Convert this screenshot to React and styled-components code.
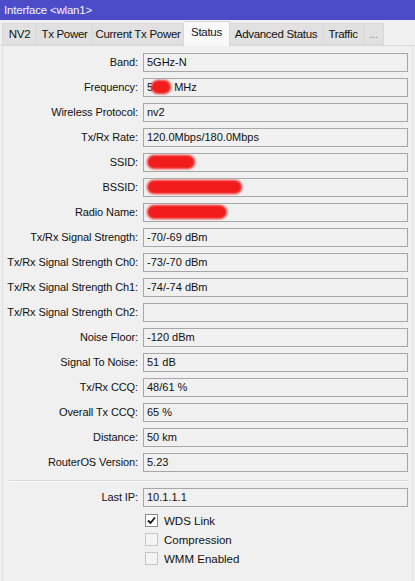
import React from 'react'
import styled, { createGlobalStyle } from 'styled-components';

const GlobalStyle = createGlobalStyle`
  body {
    margin: 0;
    background: #f0f0f0;
    font-family: "Liberation Sans", Arial, sans-serif;
  }
`;

const tabs = [
  { name: 'NV2', w: 35 },
  { name: 'Tx Power', w: 56 },
  { name: 'Current Tx Power', w: 91 },
  { name: 'Status', w: 46, active: true },
  { name: 'Advanced Status', w: 93 },
  { name: 'Traffic', w: 41 },
  { name: '...', w: 20, muted: true },
];

const rows = [
  { label: 'Band', value: '5GHz-N' },
  { label: 'Frequency', value: 'freq' },
  { label: 'Wireless Protocol', value: 'nv2' },
  { label: 'Tx/Rx Rate', value: '120.0Mbps/180.0Mbps' },
  { label: 'SSID', redact: 48 },
  { label: 'BSSID', redact: 95 },
  { label: 'Radio Name', redact: 80 },
  { label: 'Tx/Rx Signal Strength', value: '-70/-69 dBm' },
  { label: 'Tx/Rx Signal Strength Ch0', value: '-73/-70 dBm' },
  { label: 'Tx/Rx Signal Strength Ch1', value: '-74/-74 dBm' },
  { label: 'Tx/Rx Signal Strength Ch2', value: '' },
  { label: 'Noise Floor', value: '-120 dBm' },
  { label: 'Signal To Noise', value: '51 dB' },
  { label: 'Tx/Rx CCQ', value: '48/61 %' },
  { label: 'Overall Tx CCQ', value: '65 %' },
  { label: 'Distance', value: '50 km' },
  { label: 'RouterOS Version', value: '5.23' },
];

const checks = [
  { label: 'WDS Link', checked: true },
  { label: 'Compression', checked: false },
  { label: 'WMM Enabled', checked: false },
];

function Value({ row }) {
  if (row.redact) return <Redact $w={row.redact} />;
  if (row.value === 'freq') {
    return (
      <>
        5<Redact $w={20} style={{ marginLeft: -2 }} /> MHz
      </>
    );
  }
  return row.value;
}

function App() {
  return (
    <Window>
      <GlobalStyle />
      <TitleBar>Interface &lt;wlan1&gt;</TitleBar>
      <TabBar>
        {tabs.map(t => (
          <Tab key={t.name} $w={t.w} $active={t.active} $muted={t.muted}>{t.name}</Tab>
        ))}
      </TabBar>
      <Panel>
        <Form>
          {rows.map(r => (
            <React.Fragment key={r.label}>
              <Label>{r.label}:</Label>
              <Field><Value row={r} /></Field>
            </React.Fragment>
          ))}
        </Form>
        <Separator />
        <Form>
          <Label>Last IP:</Label>
          <Field>10.1.1.1</Field>
        </Form>
        <Checks>
          {checks.map(c => (
            <CheckRow key={c.label}>
              <Box $checked={c.checked}>
                {c.checked && (
                  <svg width="9" height="9" viewBox="0 0 9 9">
                    <path d="M1 4.5 L3.5 7 L8 1.5" fill="none" stroke="#111" strokeWidth="1.8" />
                  </svg>
                )}
              </Box>
              {c.label}
            </CheckRow>
          ))}
        </Checks>
      </Panel>
    </Window>
  )
}

const Window = styled.div`
  width: 415px;
  height: 581px;
  overflow: hidden;
  background: #f0f0f0;
  font-size: 11px;
  color: #111;
`;

const TitleBar = styled.div`
  height: 20px;
  line-height: 20px;
  padding-left: 4px;
  background: #4c4cc8;
  color: #f4f4ff;
  font-size: 11.5px;
  letter-spacing: -0.2px;
`;

const TabBar = styled.div`
  display: flex;
  align-items: flex-end;
  height: 25px;
  padding-left: 2px;
  border-bottom: 1px solid #d9d9d9;
`;

const Tab = styled.div`
  width: ${p => p.$w}px;
  height: ${p => (p.$active ? '25px' : '22px')};
  line-height: ${p => (p.$active ? '21px' : '21px')};
  margin-bottom: ${p => (p.$active ? '-1px' : '0')};
  background: ${p => (p.$active ? '#f9f9f9' : '#e1e1e1')};
  border: 1px solid #d8d8d8;
  border-left: none;
  border-bottom: ${p => (p.$active ? 'none' : '1px solid #d8d8d8')};
  color: ${p => (p.$muted ? '#888' : '#111')};
  font-size: 11.5px;
  letter-spacing: -0.3px;
  text-align: center;
  box-sizing: border-box;
  white-space: nowrap;
  &:first-child {
    border-left: 1px solid #d8d8d8;
  }
`;

const Panel = styled.div`
  margin: 0 2px;
  height: 536px;
  padding: 7px 4px 0 0;
  border-left: 1px solid #e2e2e2;
  border-right: 1px solid #e2e2e2;
  box-sizing: border-box;
`;

const Form = styled.div`
  display: grid;
  grid-template-columns: 135px 1fr;
  column-gap: 5px;
  row-gap: 6px;
`;

const Label = styled.div`
  height: 19px;
  line-height: 19px;
  text-align: right;
  white-space: nowrap;
  font-size: 11px;
  letter-spacing: -0.1px;
`;

const Field = styled.div`
  height: 19px;
  line-height: 17px;
  box-sizing: border-box;
  border: 1px solid #a7a7a7;
  background: #f0f0f0;
  padding-left: 3px;
  font-size: 11px;
  white-space: nowrap;
  overflow: hidden;
`;

const Redact = styled.span`
  display: inline-block;
  vertical-align: middle;
  width: ${p => p.$w}px;
  height: 14px;
  margin-top: -2px;
  border-radius: 8px;
  background: #f21c1c;
  filter: blur(0.8px);
`;

const Separator = styled.div`
  margin: 8px 0 6px 6px;
  height: 1px;
  background: #d7d7d7;
  border-bottom: 1px solid #fbfbfb;
`;

const Checks = styled.div`
  display: flex;
  flex-direction: column;
  padding: 4px 0 0 142px;
`;

const CheckRow = styled.div`
  display: flex;
  align-items: center;
  gap: 6px;
  height: 19px;
  font-size: 11.5px;
`;

const Box = styled.div`
  width: 13px;
  height: 13px;
  box-sizing: border-box;
  border: 1px solid ${p => (p.$checked ? '#8a8a8a' : '#c6c6c6')};
  background: ${p => (p.$checked ? '#fff' : '#f4f4f4')};
  display: flex;
  align-items: center;
  justify-content: center;
`;

export default App
